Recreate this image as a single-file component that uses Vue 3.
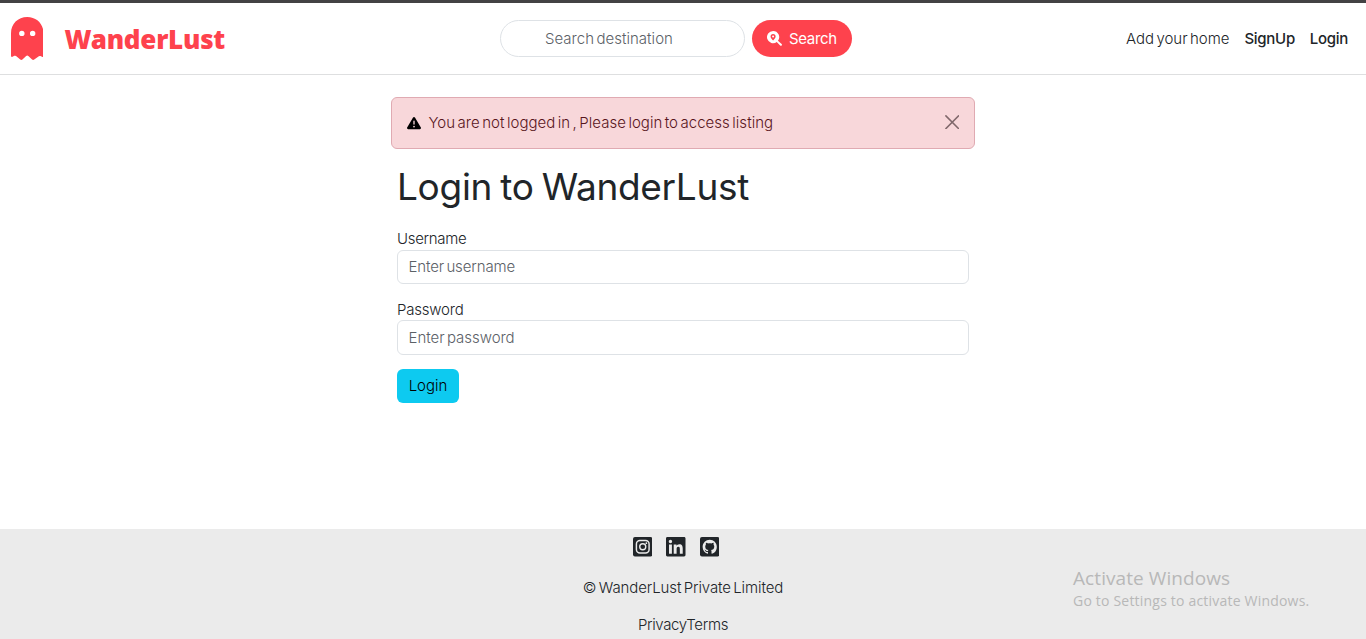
<script setup>
import { ref } from 'vue'

const destination = ref('')
const username = ref('')
const password = ref('')
const alertOpen = ref(true)
</script>

<template>
  <div class="page">
    <header class="navbar">
      <a class="brand">
        <svg class="ghost" viewBox="0 0 33 44">
          <path fill="currentColor" fill-rule="evenodd" d="M0 16.5C0 7 7 0 16.5 0S33 7 33 16.5V39.5q0 1.6-1.5.9l-1.600-.7q-.9-.4-1.600.2L23.600 43.200q-1.100 1-2.200 0l-3.800-3.500q-1.100-1-2.200 0L11.600 43.200q-1.100 1-2.200 0l-4.300-3.500q-.8-.6-1.700-.2l-1.900.9Q0 41.100 0 39.500ZM11 13.900a2.750 2.750 0 1 0 0 5.500 2.750 2.750 0 0 0 0-5.500Zm11 0a2.750 2.750 0 1 0 0 5.500 2.750 2.750 0 0 0 0-5.500Z" />
        </svg>
        <span class="brand-name">WanderLust</span>
      </a>
      <form class="search" @submit.prevent>
        <input v-model="destination" class="search-input" placeholder="Search destination" />
        <button class="search-button">
          <svg class="search-icon" viewBox="0 0 16 16">
            <path fill="currentColor" fill-rule="evenodd" d="M6.500 0a6.500 6.500 0 1 0 3.900 11.700l3.600 3.700a1.100 1.100 0 0 0 1.600-1.600L11.700 10.400A6.500 6.500 0 0 0 6.500 0Zm0 3.200a2.700 2.700 0 0 1 2.700 2.700c0 1.700-1.900 3.400-2.700 4.200-.8-.8-2.700-2.500-2.700-4.200a2.700 2.700 0 0 1 2.700-2.700Z" />
            <circle cx="6.500" cy="5.900" r="1.100" fill="currentColor" />
          </svg>
          <span class="search-label">Search</span>
        </button>
      </form>
      <nav class="links">
        <a class="add-home">Add your home</a>
        <a class="strong signup">SignUp</a>
        <a class="strong login-link">Login</a>
      </nav>
    </header>

    <main class="content">
      <div v-if="alertOpen" class="alert">
        <svg class="warning" viewBox="0 0 512 512">
          <path fill="currentColor" fill-rule="evenodd" d="M256 32c14 0 27 7 35 20l216 368c16 27-3 60-35 60H40c-32 0-51-33-35-60L221 52c8-13 21-20 35-20Zm0 128c-13 0-24 11-24 24v112a24 24 0 0 0 48 0V184c0-13-11-24-24-24Zm0 192a32 32 0 1 0 0 64 32 32 0 0 0 0-64Z" />
        </svg>
        <span class="alert-text">You are not logged in , Please login to access listing</span>
        <button class="close" aria-label="Close" @click="alertOpen = false">
          <svg viewBox="0 0 16 16"><path d="M1 1 15 15M15 1 1 15" fill="none" stroke="currentColor" stroke-width="1.700" stroke-linecap="round" /></svg>
        </button>
      </div>
      <form class="login-form" @submit.prevent>
        <h1>Login to WanderLust</h1>
        <label class="label-user" for="username">Username</label>
        <input id="username" v-model="username" class="field field-user" placeholder="Enter username" />
        <label class="label-pass" for="password">Password</label>
        <input id="password" v-model="password" class="field field-pass" type="password" placeholder="Enter password" />
        <button class="submit">Login</button>
      </form>
    </main>

    <footer class="footer">
      <div class="socials">
        <svg viewBox="0 0 20 20">
          <rect width="20" height="20" rx="2" fill="#212529" />
          <rect x="3.500" y="3.500" width="13" height="13" rx="3.600" fill="none" stroke="#ebebeb" stroke-width="1.500" />
          <circle cx="10" cy="10" r="3.100" fill="none" stroke="#ebebeb" stroke-width="1.400" />
          <circle cx="13.700" cy="6.400" r=".9" fill="#ebebeb" />
        </svg>
        <svg viewBox="0 32 448 448">
          <path fill="#212529" d="M416 32H31.900C14.300 32 0 46.500 0 64.300v383.400C0 465.500 14.300 480 31.900 480H416c17.600 0 32-14.500 32-32.300V64.300c0-17.800-14.400-32.300-32-32.300zM135.400 416H69V202.200h66.500V416zm-33.200-243c-21.300 0-38.500-17.300-38.500-38.500S80.900 96 102.200 96c21.200 0 38.500 17.300 38.500 38.500 0 21.300-17.200 38.500-38.500 38.500zm282.100 243h-66.400V312c0-24.800-.5-56.700-34.500-56.700-34.600 0-39.900 27-39.900 54.900V416h-66.400V202.200h63.700v29.200h.9c8.900-16.800 30.600-34.500 62.900-34.500 67.200 0 79.700 44.300 79.700 101.900V416z" />
        </svg>
        <svg viewBox="0 0 20 20">
          <rect width="20" height="20" rx="2" fill="#212529" />
          <path transform="translate(2.700 2.900) scale(.91)" fill="#ebebeb" d="M8 0C3.580 0 0 3.580 0 8c0 3.540 2.290 6.530 5.470 7.590.4.070.55-.17.55-.38 0-.19-.01-.82-.01-1.490-2.010.37-2.530-.49-2.690-.94-.09-.23-.48-.94-.82-1.130-.28-.15-.68-.52-.01-.53.63-.01 1.080.58 1.230.82.72 1.210 1.870.87 2.330.66.070-.52.28-.87.51-1.070-1.780-.2-3.640-.89-3.640-3.950 0-.87.31-1.590.82-2.150-.08-.2-.36-1.020.08-2.120 0 0 .67-.21 2.200.82.64-.18 1.320-.27 2-.27.68 0 1.360.09 2 .27 1.530-1.040 2.200-.82 2.200-.82.44 1.100.16 1.920.08 2.120.51.56.82 1.270.82 2.150 0 3.070-1.870 3.750-3.650 3.950.29.25.54.73.54 1.480 0 1.070-.01 1.930-.01 2.200 0 .21.15.46.55.38A8.013 8.013 0 0 0 16 8c0-4.420-3.580-8-8-8z" />
        </svg>
      </div>
      <p class="copyright">© WanderLust Private Limited</p>
      <p class="legal"><a>Privacy</a><a>Terms</a></p>
      <aside class="watermark">
        <div class="watermark-title">Activate Windows</div>
        <div class="watermark-text">Go to Settings to activate Windows.</div>
      </aside>
    </footer>
  </div>
</template>

<style>
body {
  margin: 0;
  background: #fff;
}
</style>

<style scoped>
* {
  box-sizing: border-box;
}
.page {
  height: 639px;
  overflow: hidden;
  display: flex;
  flex-direction: column;
  font: 300 15px/22px Inter, "Liberation Sans", sans-serif;
  word-spacing: -1.8px;
  color: #212529;
}
input,
button {
  font: inherit;
  word-spacing: inherit;
}
.navbar {
  height: 75px;
  flex: none;
  display: grid;
  grid-template-columns: 500px 352px 1fr;
  align-items: center;
  border-top: 3px solid #434244;
  border-bottom: 1px solid #dedfe0;
}
.brand {
  display: flex;
  align-items: center;
  padding-left: 10.5px;
  color: #fe424d;
}
.ghost {
  width: 32.5px;
  height: 43.300px;
  margin-top: 1px;
  margin-right: 21.5px;
}
.brand-name {
  font: 900 26px/36px "Noto Sans", "Open Sans", sans-serif;
  letter-spacing: -0.25px;
  padding-top: 2px;
  white-space: nowrap;
}
.search {
  display: flex;
  gap: 7px;
}
.search-input {
  width: 245px;
  height: 37px;
  padding: 0 44px;
  border: 1px solid #dee2e6;
  border-radius: 19px;
  outline: none;
  letter-spacing: 0.02px;
}
input::placeholder {
  color: #5b6167;
  opacity: 1;
}
.search-button {
  width: 100px;
  height: 37px;
  display: flex;
  align-items: center;
  padding: 0 0 0 15px;
  border: 0;
  border-radius: 19px;
  background: #fe424d;
  color: #fff;
  font-weight: 400;
}
.search-icon {
  width: 15px;
  height: 15px;
  margin-right: 7px;
}
.search-label {
  letter-spacing: -0.35px;
}
.links {
  display: flex;
  justify-content: flex-end;
  gap: 15px;
  padding-right: 18px;
  white-space: nowrap;
}
.strong {
  font-weight: 500;
  letter-spacing: -0.3px;
}
.content {
  flex: 1;
  width: 584px;
  margin: 0 auto;
  padding-top: 22px;
}
.alert {
  height: 52px;
  display: flex;
  align-items: center;
  padding: 0 15px;
  border: 1px solid #e0aab2;
  border-radius: 6px;
  background: #f8d7da;
  color: #58151c;
}
.warning {
  width: 14px;
  height: 14px;
  margin-right: 7.5px;
  color: #000;
}
.alert-text {
  letter-spacing: 0.03px;
  white-space: nowrap;
}
.close {
  display: flex;
  margin-left: auto;
  margin-top: -2px;
  padding: 0;
  border: 0;
  background: none;
  color: #80686b;
}
.close svg {
  width: 14.5px;
  height: 14.5px;
}
.login-form {
  display: flex;
  flex-direction: column;
  padding: 0 6px;
}
h1 {
  margin: 15px 0 18px;
  font-size: 37px;
  line-height: 46px;
  font-weight: 400;
  letter-spacing: -0.3px;
  word-spacing: -2px;
  white-space: nowrap;
}
label {
  height: 22px;
  align-self: flex-start;
}
.label-user {
  letter-spacing: -0.3px;
}
.field {
  width: 572px;
  height: 34px;
  padding: 0 10.5px;
  border: 1px solid #dee2e6;
  border-radius: 6px;
  outline: none;
  letter-spacing: -0.12px;
}
.field-user {
  padding-bottom: 1px;
}
.label-pass {
  margin-top: 15px;
  letter-spacing: -0.2px;
}
.field-pass {
  height: 35px;
  margin-top: -1px;
  letter-spacing: -0.03px;
}
.submit {
  width: 62px;
  height: 34px;
  margin-top: 14px;
  padding: 0;
  border: 0;
  border-radius: 6px;
  background: #0dcaf0;
  color: #000;
}
.footer {
  position: relative;
  height: 110px;
  flex: none;
  display: flex;
  flex-direction: column;
  align-items: center;
  background: #ebebeb;
}
.socials {
  display: flex;
  gap: 14px;
  padding: 8px 14px 0 0;
}
.socials svg {
  width: 19.500px;
  height: 19.500px;
}
.footer p {
  margin: 0;
}
.footer .copyright {
  margin-top: 20px;
  letter-spacing: -0.1px;
}
.footer .legal {
  margin-top: 15px;
  letter-spacing: -0.35px;
}
.watermark {
  position: absolute;
  left: 1073px;
  top: 36px;
  color: #b8b8b8;
  font-family: "Open Sans", "Noto Sans", sans-serif;
  font-weight: 400;
  word-spacing: 0;
  white-space: nowrap;
}
.watermark-title {
  font-size: 19px;
  line-height: 26px;
  letter-spacing: 0.08px;
}
.watermark-text {
  font-size: 14px;
  line-height: 19px;
  letter-spacing: 0.2px;
}
</style>
